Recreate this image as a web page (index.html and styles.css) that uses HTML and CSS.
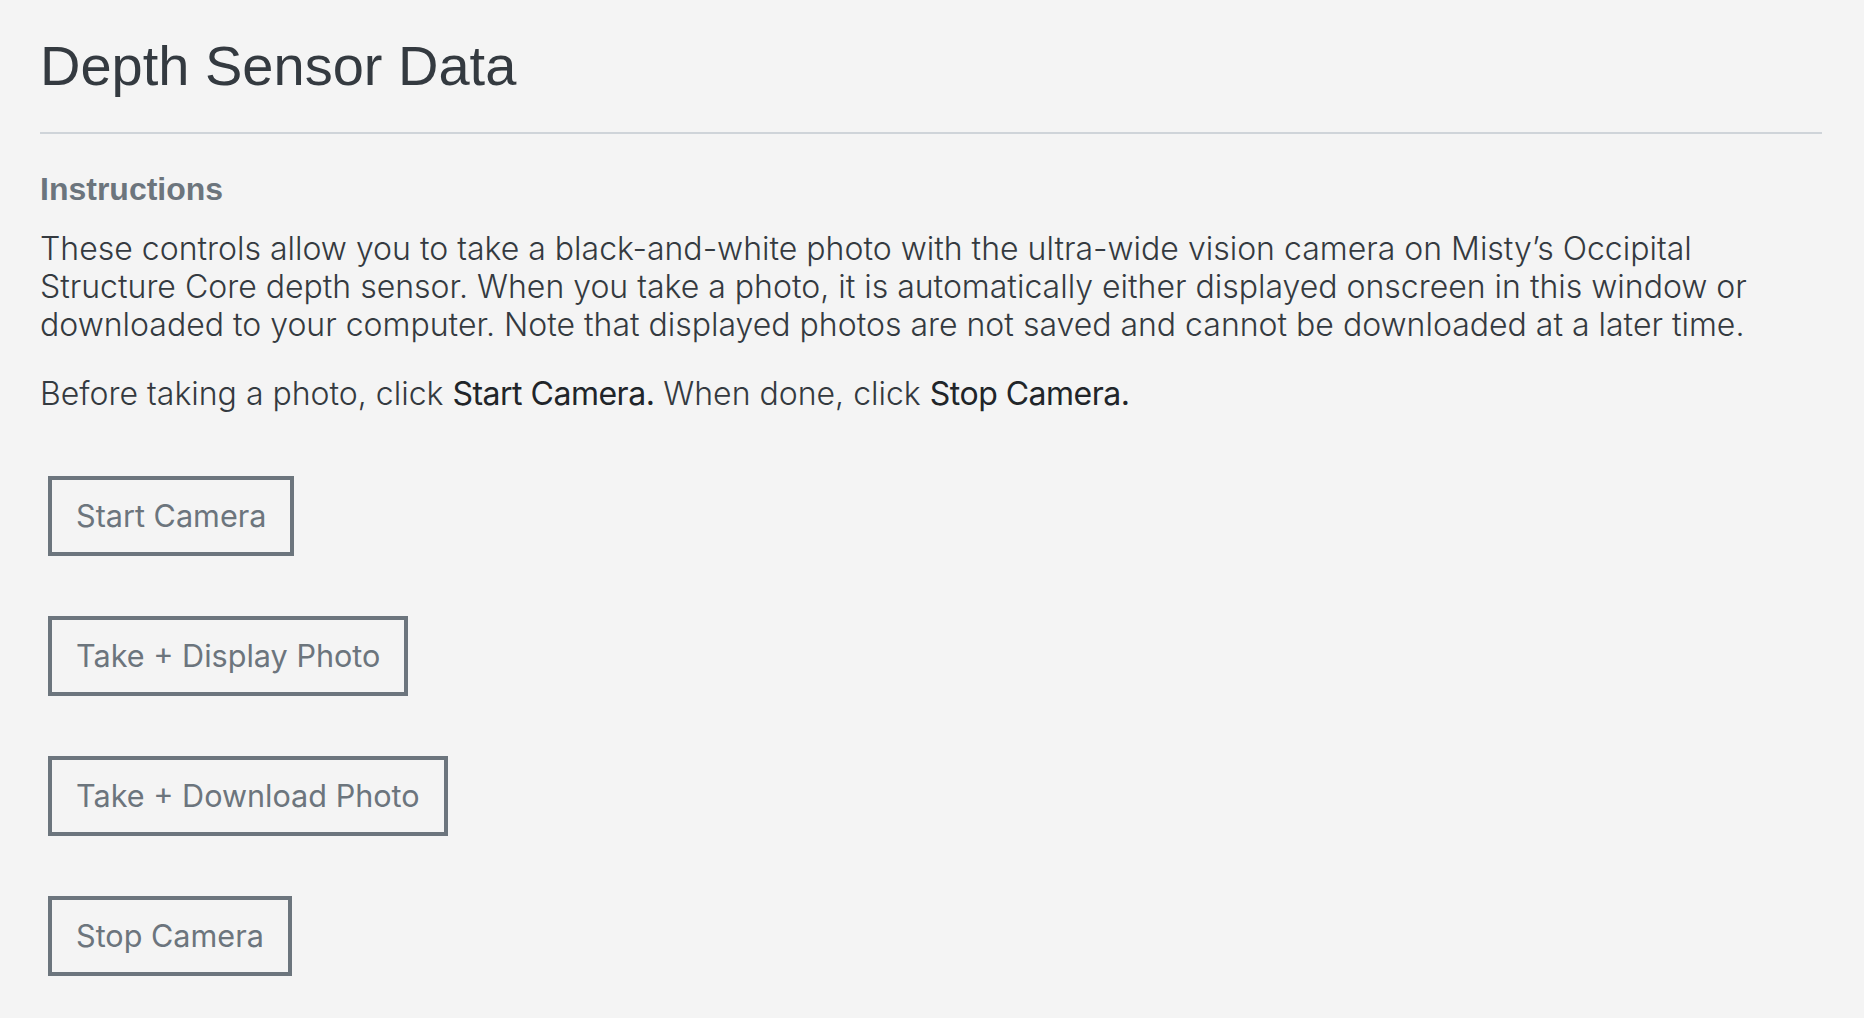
FILE: index.html
```html
<!DOCTYPE html>
<html lang="en">
<head>
<meta charset="utf-8">
<title>Depth Sensor Data</title>
<link rel="stylesheet" href="styles.css">
</head>
<body>
<main class="page">
  <h1 class="title">Depth Sensor Data</h1>
  <hr class="rule">
  <h2 class="section-label">Instructions</h2>
  <p class="copy">These controls allow you to take a black-and-white photo with the ultra-wide vision camera on Misty’s Occipital Structure Core depth sensor. When you take a photo, it is automatically either displayed onscreen in this window or downloaded to your computer. Note that displayed photos are not saved and cannot be downloaded at a later time.</p>
  <p class="copy copy-last">Before taking a photo, click <span class="em">Start Camera.</span> When done, click <span class="em">Stop Camera.</span></p>
  <div class="actions">
    <button class="btn" type="button">Start Camera</button>
    <button class="btn" type="button">Take + Display Photo</button>
    <button class="btn" type="button">Take + Download Photo</button>
    <button class="btn" type="button">Stop Camera</button>
  </div>
</main>
</body>
</html>
```

FILE: styles.css
```css
html, body {
  margin: 0;
  padding: 0;
  background: #f4f4f4;
}

.page {
  padding: 0 42px 0 40px;
}

.title {
  margin: 32px 0 0;
  font-family: "Liberation Sans", Arial, sans-serif;
  font-weight: 400;
  font-size: 56px;
  line-height: 67px;
  color: #343a40;
}

.rule {
  margin: 33px 0 0;
  border: 0;
  height: 2px;
  background: #cfd4d9;
}

.section-label {
  margin: 36px 0 0;
  font-family: "Liberation Sans", Arial, sans-serif;
  font-weight: 700;
  font-size: 32px;
  line-height: 38px;
  color: #6c757d;
}

.copy {
  margin: 22px 0 0;
  font-family: Inter, "Liberation Sans", sans-serif;
  font-weight: 300;
  font-size: 32px;
  line-height: 38px;
  color: #343a40;
}

.copy-last {
  margin-top: 31px;
}

.em {
  font-weight: 400;
  letter-spacing: -0.5px;
  color: #212529;
}

.actions {
  margin: 63px 0 0 8px;
  display: flex;
  flex-direction: column;
  align-items: flex-start;
  gap: 60px;
}

.btn {
  box-sizing: border-box;
  height: 80px;
  margin: 0;
  padding: 0 24px;
  border: 4px solid #6c757d;
  border-radius: 0;
  background: transparent;
  font-family: Inter, "Liberation Sans", sans-serif;
  font-weight: 400;
  font-size: 30.6px;
  line-height: 72px;
  color: #6c757d;
}
```
